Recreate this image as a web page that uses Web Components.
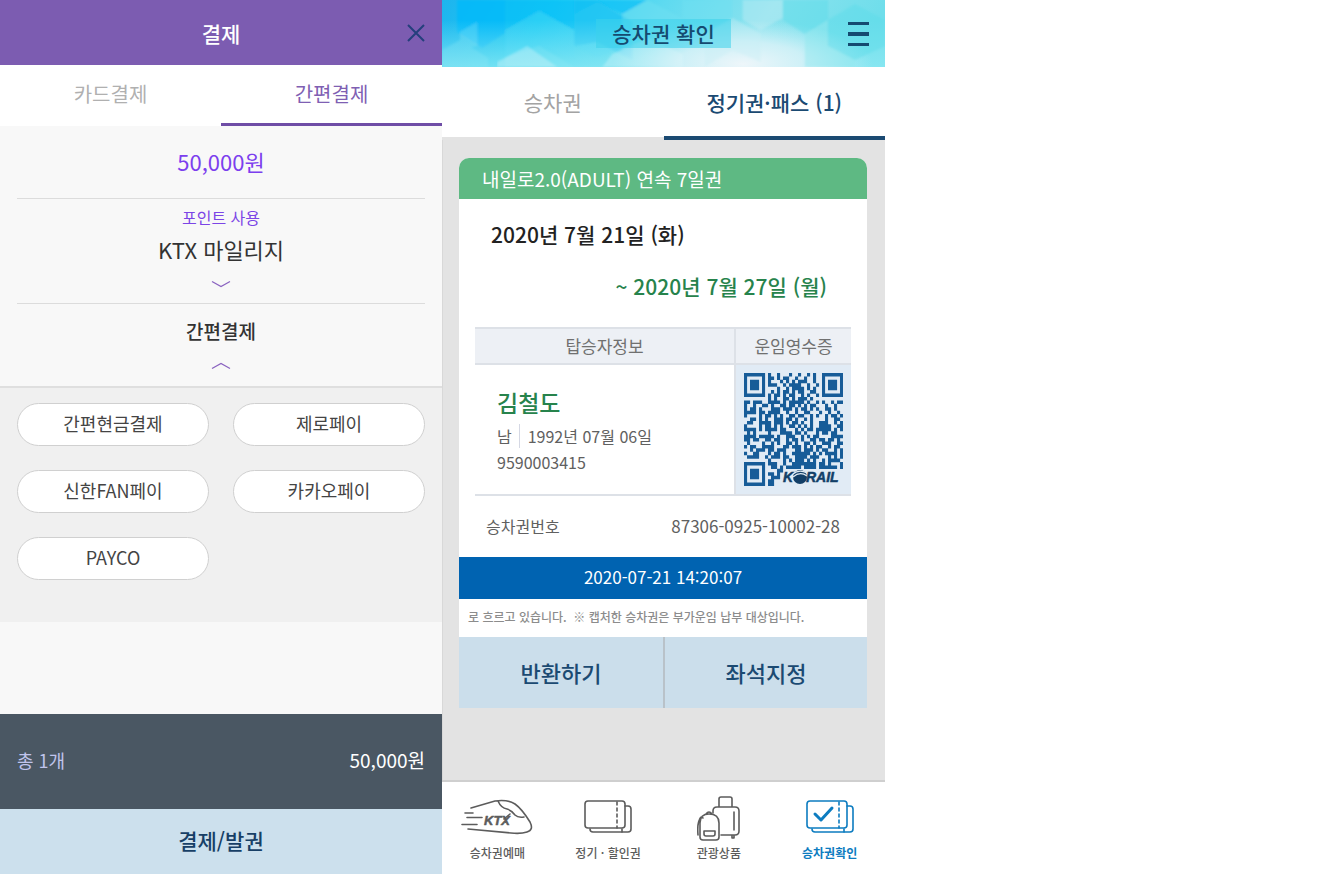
<!DOCTYPE html>
<html lang="ko">
<head>
<meta charset="utf-8">
<meta name="viewport" content="width=device-width, initial-scale=1">
<title>결제 · 승차권 확인</title>
<style>
  body {
    margin: 0;
    min-height: 100vh;
    display: grid;
    grid-template-columns: 442fr 443fr 441fr;
    background: #fff;
    font-family: "Noto Sans CJK KR", sans-serif;
    color: #333;
  }
</style>
</head>
<body>
<pay-screen></pay-screen>
<ticket-screen></ticket-screen>

<script>
const define = (name, html, setup) => {
  const template = document.createElement('template');
  template.innerHTML = html;
  customElements.define(name, class extends HTMLElement {
    constructor() {
      super();
      this.attachShadow({ mode: 'open' }).append(template.content.cloneNode(true));
    }
    connectedCallback() { if (setup) setup(this, this.shadowRoot); }
  });
};

/* Tab: active state comes from the attribute */
define('tab-item', `
  <style>
    :host { display: flex; }
    button { flex: 1; border: 0; background: none; padding: 0; font: inherit; cursor: pointer;
      line-height: 24px; color: var(--tab-idle, #b0b0b0);
      border-bottom: var(--tab-bar, 3px) solid transparent; }
    :host([active]) button { color: var(--tab-text); border-bottom-color: var(--tab-line); }
  </style>
  <button type="button" role="tab"><slot></slot></button>`,
  (el, root) => root.querySelector('button').setAttribute('aria-selected', el.hasAttribute('active')));

/* Expandable row with a chevron below its heading */
define('fold-row', `
  <style>
    :host { display: block; }
    button { display: flex; flex-direction: column; align-items: center; width: 100%; border: 0; padding: 0;
      background: none; font: inherit; color: inherit; cursor: pointer; gap: 17px; }
    svg { display: block; }
    :host([open]) svg { transform: rotate(180deg); }
  </style>
  <button type="button"><slot></slot>
    <svg width="20" height="8" viewBox="0 0 20 8" fill="none" stroke="#8a63c0" stroke-width="1.3"><path d="M1 1.5 10 6.5 19 1.5"/></svg>
  </button>`);

define('pay-option', `
  <style>
    :host { display: flex; }
    button { flex: 1; height: 43px; border: 1px solid #d0d0d0; border-radius: 22px; background: #fff;
      font: inherit; font-size: 18px; line-height: 24px; color: #444; padding: 0 0 3px; cursor: pointer; }
  </style>
  <button type="button"><slot></slot></button>`);

define('pay-screen', `
  <style>
    :host { display: flex; flex-direction: column; background: #f8f8f8; }
    header { display: grid; grid-template-columns: 1fr auto 1fr; align-items: center; height: 65px; padding: 0 16px;
      background: #7c5cb1; color: #fff; }
    h1 { grid-column: 2; margin: 0; font-size: 21px; font-weight: 500; line-height: 28px; }
    .close { justify-self: end; border: 0; background: none; padding: 0; display: block; cursor: pointer; }
    svg { display: block; }
    nav { display: grid; grid-template-columns: 1fr 1fr; height: 61px; background: #fff; font-size: 20px;
      --tab-text: #7f5fb3; --tab-line: #6f4da6; }
    .rows { padding: 0 17px; text-align: center; }
    .amount { margin: 0; padding: 21px 0 23px; font-size: 22px; line-height: 28px; color: #7c3fee; }
    .fold { border-top: 1px solid #dcdcdc; }
    .point { padding: 6px 0 15px; }
    .simple { padding: 13px 0 16px; }
    .small, .big { display: block; }
    .small { font-size: 16px; line-height: 24px; color: #7c45e6; }
    .big { font-size: 22px; line-height: 28px; padding-top: 6px; }
    .mid { font-size: 19px; font-weight: 500; line-height: 28px; }
    .options { display: grid; grid-template-columns: 1fr 1fr; gap: 24px; padding: 15px 17px 42px;
      background: #f0f0f0; border-top: 2px solid #dfdfdf; }
    .total { display: flex; justify-content: space-between; align-items: center; height: 91px; margin-top: auto;
      padding: 0 17px 4px; background: #4a5763; color: #fff; }
    .count { font-size: 18px; color: #c0c4ec; }
    .sum { font-size: 19px; }
    .submit { height: 65px; border: 0; padding: 0 0 3px; background: #cce0ed; color: #173f66; font: inherit; font-size: 21px;
      font-weight: 500; cursor: pointer; }
  </style>
  <header>
    <h1>결제</h1>
    <button class="close" type="button" aria-label="닫기">
      <svg width="20" height="20" viewBox="0 0 20 20" fill="none" stroke="#243f7c" stroke-width="2"><path d="M2 2 18 18M18 2 2 18"/></svg>
    </button>
  </header>
  <nav role="tablist"><tab-item>카드결제</tab-item><tab-item active>간편결제</tab-item></nav>
  <div class="rows">
    <p class="amount">50,000원</p>
    <div class="fold point"><fold-row><span><span class="small">포인트 사용</span><span class="big">KTX 마일리지</span></span></fold-row></div>
    <div class="fold simple"><fold-row open><span class="mid">간편결제</span></fold-row></div>
  </div>
  <div class="options">
    <pay-option>간편현금결제</pay-option><pay-option>제로페이</pay-option>
    <pay-option>신한FAN페이</pay-option><pay-option>카카오페이</pay-option>
    <pay-option>PAYCO</pay-option>
  </div>
  <div class="total"><span class="count">총 1개</span><span class="sum">50,000원</span></div>
  <button class="submit" type="button">결제/발권</button>`);

/* Receipt code, 33 × 33 modules */
const MODULES = [
  '#######.#..#...#..#..#.#..#######',
  '#.....#.##.#.##..#..#..#..#.....#',
  '#.###.#.#...#.#.#.###..#..#.###.#',
  '#.###.#.###..#.####..#..#.#.###.#',
  '#.###.#....#..#.####.#.#..#.###.#',
  '#.....#..#.#.##.#.##..##..#.....#',
  '#######.#.##.#.##..#.#..#.#######',
  '........#.#..##.#.###.#..........',
  '##.###..####.#.#####.#..#.#..#.##',
  '#..#..##.#..##.##.#.#.##...#..#..',
  '#.##.#...###.###.#.##.#.#..##.#..',
  '####.##.####..#..#..##...#..#..#.',
  '#....#.##.#.#..##.##..#.#..#.##.#',
  '..##.#.#..###.##.#..#.#....#..##.',
  '.##..####.###.#.##.#..#..###..#.#',
  '#....#.##.#.#..##.#.#.#..####..##',
  '####.#.####.##...#.#.##.#####.#.#',
  '.#.#....#...####.##.#...#.##.##..',
  '####.#####.#..###..#.#.##....####',
  '##.##..##.##..#.##.#..##.##.##.#.',
  '.#....#..#.#..##.#..##.#..###..##',
  '#.##..####...##.###.#.#.##..#.##.',
  '..#.###.##.###...##.###.#.##..#.#',
  '#..##...#.##.#..######.#.#.####.#',
  '.####..#.###.##..####.###...#.#.#',
  '........#....#.#.###.#.#..#.####.',
  '#######.###..#..########.##.#...#',
  '#.....#..##.#.#####.####.######.#',
  '#.###.#....##....................',
  '#.###.#.##.#.....................',
  '#.###.#..###.....................',
  '#.....#.##.......................',
  '#######.##.......................'
];
define('receipt-code', `
  <style>
    :host { display: block; }
    svg { display: block; margin: 0 auto; }
    text { font: italic 700 14px "Liberation Sans", sans-serif; fill: #123f68; stroke: #123f68; stroke-width: .5; }
  </style>
  <svg width="99" height="113" viewBox="0 0 99 113" role="img" aria-label="운임영수증 QR 코드">
    <path class="modules" fill="#175c98" transform="scale(3 3.424)"/>
    <text x="39" y="109">K</text>
    <circle cx="56" cy="104" r="7" fill="#123f68"/>
    <path d="M49 101Q55 96 63 100M49 104Q56 98 63 103" fill="none" stroke="#e1ebf5" stroke-width="1.2"/>
    <text x="62" y="109">RAIL</text>
  </svg>`,
  (el, root) => {
    let d = '';
    MODULES.forEach((row, y) => [...row].forEach((m, x) => { if (m === '#') d += `M${x} ${y}h1.03v1.03h-1.03z`; }));
    root.querySelector('.modules').setAttribute('d', d);
  });

define('train-ticket', `
  <style>
    :host { display: block; background: #fff; border-radius: 10px 10px 0 0; overflow: hidden; }
    h2 { margin: 0; height: 41px; padding: 0 23px; background: #5eb983; color: #fff; font-size: 19px; font-weight: 400; line-height: 41px; }
    .dates { padding: 19px 40px 25px 32px; font-size: 21px; line-height: 32px; font-weight: 500; color: #222; }
    .dates p { margin: 0; }
    .dates .to { padding-top: 20px; text-align: right; color: #27834c; }
    .wrap { padding: 0 16px; }
    table { width: 100%; border-collapse: collapse; table-layout: fixed; }
    th, td { padding: 0; border-top: 2px solid #dde1e7; border-bottom: 2px solid #dde1e7; }
    th { height: 34px; background: #edf0f5; font-size: 17px; font-weight: 400; line-height: 24px; color: #707070; }
    td { height: 129px; }
    .code { width: 115px; border-left: 2px solid #dde1e7; }
    td.code { background: #e1ebf5; }
    .person { padding: 0 22px; font-size: 16px; line-height: 26px; color: #606060; }
    .person strong { display: block; font-size: 23px; font-weight: 500; line-height: 36px; padding-bottom: 3px; color: #27834c; }
    .person span + span { border-left: 1px solid #d5d8e4; margin-left: 7px; padding-left: 8px; }
    .person p { margin: 0; }
    dl { display: flex; justify-content: space-between; align-items: center; height: 59px; margin: 0; padding: 0 27px 2px; color: #606060; }
    dt { font-size: 16px; }
    dd { margin: 0; font-size: 17px; }
    time { display: block; height: 42px; line-height: 40px; background: #0063b1; color: #fff; text-align: center; font-size: 17px; }
    .note { margin: 0; height: 38px; line-height: 35px; padding: 0 9px; font-size: 12px; font-weight: 500; color: #8c8c8c; white-space: pre; overflow: hidden; }
    .actions { display: grid; grid-template-columns: 1fr 1fr; height: 71px; background: #cbdeeb; }
    .actions button { border: 0; background: none; padding: 0 0 2px; font: inherit; font-size: 22px; font-weight: 500; color: #1b4a72; cursor: pointer; }
    .actions button + button { border-left: 2px solid #b9c2c9; }
  </style>
  <h2>내일로2.0(ADULT) 연속 7일권</h2>
  <div class="dates"><p>2020년 7월 21일 (화)</p><p class="to">~ 2020년 7월 27일 (월)</p></div>
  <div class="wrap">
    <table>
      <thead><tr><th scope="col">탑승자정보</th><th class="code" scope="col">운임영수증</th></tr></thead>
      <tbody><tr>
        <td><div class="person"><strong>김철도</strong><p><span>남</span><span>1992년 07월 06일</span></p><p>9590003415</p></div></td>
        <td class="code"><receipt-code></receipt-code></td>
      </tr></tbody>
    </table>
  </div>
  <dl><dt>승차권번호</dt><dd>87306-0925-10002-28</dd></dl>
  <time datetime="2020-07-21T14:20:07">2020-07-21 14:20:07</time>
  <p class="note">로 흐르고 있습니다.  ※ 캡처한 승차권은 부가운임 납부 대상입니다.</p>
  <div class="actions"><button type="button">반환하기</button><button type="button">좌석지정</button></div>`);

define('nav-item', `
  <style>
    :host { display: block; color: #5c5c5c; font-weight: 500; }
    :host([active]) { color: #0d7cc0; font-weight: 700; }
    a { display: flex; flex-direction: column; align-items: center; gap: 2px; padding-top: 13px; color: inherit;
      text-decoration: none; font-size: 12px; line-height: 20px; }
  </style>
  <a href="#"><slot name="icon"></slot><span><slot></slot></span></a>`);

define('ticket-screen', `
  <style>
    :host { display: flex; flex-direction: column; background: #e3e3e3; box-shadow: inset 1px 0 #d8d8d8; }
    header { display: grid; height: 67px; overflow: hidden; }
    header > * { grid-area: 1 / 1; }
    .art { display: block; width: 100%; height: 67px; }
    .bar { display: grid; grid-template-columns: 1fr auto 1fr; align-items: center; padding: 0 16px; z-index: 1; }
    h1 { grid-column: 2; margin: 0; padding: 0 16px 1px; background: rgba(60, 210, 235, .55); font-size: 21px; font-weight: 500; line-height: 28px; color: #154a70; }
    .menu { justify-self: end; border: 0; background: none; padding: 0; cursor: pointer; }
    .menu svg { display: block; }
    .tabs { display: grid; grid-template-columns: 1fr 1fr; height: 73px; font-size: 21px;
      background: linear-gradient(#fff 70px, #e3e3e3 70px); --tab-bar: 4px; --tab-idle: #a3a3a3; --tab-text: #1b4a72; --tab-line: #1b4a72; }
    .tabs [active] { font-weight: 500; }
    train-ticket { margin: 18px 18px 24px 17px; }
    footer { display: grid; grid-template-columns: repeat(4, 1fr); height: 92px; margin-top: auto; background: #fff; border-top: 2px solid #cfcfcf; }
    footer svg { display: block; fill: none; stroke: currentColor; stroke-width: 1.6; stroke-linejoin: round; stroke-linecap: round; }
    text { font: italic 700 13px "Liberation Sans", sans-serif; fill: currentColor; stroke: currentColor; stroke-width: .5; }
  </style>
  <header>
    <svg class="art" viewBox="0 0 442 67" preserveAspectRatio="none" aria-hidden="true">
      <defs>
        <linearGradient id="sky" x1="0" y1="0" x2="1" y2=".1">
          <stop offset="0" stop-color="#1db4ee"/><stop offset=".25" stop-color="#20cdf4"/>
          <stop offset=".5" stop-color="#5edaf0"/><stop offset=".75" stop-color="#8ae2ee"/><stop offset="1" stop-color="#6fdeeb"/>
        </linearGradient>
        <linearGradient id="fade" x1="0" y1="0" x2="0" y2="1"><stop offset=".3" stop-color="#8fe9f3" stop-opacity="0"/><stop offset="1" stop-color="#8fe9f3" stop-opacity=".75"/></linearGradient>
        <radialGradient id="glow"><stop offset="0" stop-color="#eef6fa"/><stop offset=".5" stop-color="#d9f2f8" stop-opacity=".85"/><stop offset="1" stop-color="#d5f1f7" stop-opacity="0"/></radialGradient>
        <filter id="soft" x="0" y="0" width="1" height="1"><feGaussianBlur stdDeviation="1.2"/></filter>
      </defs>
      <path fill="url(#sky)" d="M0 0H442V67H0z"/>
      <g filter="url(#soft)">
        <path fill="#00b9fa" opacity=".8" d="M15 0H63V33L40 48 15 32z"/>
        <path fill="#06bdf8" opacity=".6" d="M63 0H132V30L97 12 63 30zM132 0H205L180 14 155 2 132 14z"/>
        <path fill="#38d2f7" opacity=".4" d="M97 10 132 30V58L97 46 63 62V30zM155 2 190 22V42L155 58 132 44V14z"/>
        <path fill="#8be6f5" opacity=".3" d="M18 32 35 22V46L18 50zM0 50 18 40 46 58V67H0zM63 58 97 46 132 67H63z"/>
        <path fill="#12bff4" opacity=".6" d="M132 0H155L190 22V60L155 42 132 46z"/>
        <path fill="#6ee0f1" opacity=".5" d="M205 0 240 18V52L205 36 180 50V14zM240 0H290V22L262 34 240 18z"/>
      </g>
      <path fill="url(#fade)" d="M0 0H442V67H0z"/>
      <ellipse cx="300" cy="64" rx="130" ry="44" fill="url(#glow)"/>
      <g filter="url(#soft)">
        <path fill="#c9eef5" opacity=".4" d="M262 34 290 18 318 34V62L290 50 262 67zM300 0H340V18L318 30 300 20z"/>
        <path fill="#5cdbe9" opacity=".45" d="M340 0H385V20L362 34 340 20zM385 20 412 4 442 20V46L412 60 385 46z"/>
        <path fill="#8fe6ee" opacity=".45" d="M362 34 385 20V46L412 60V67H362z"/>
        <path fill="#e0f6f9" opacity=".35" d="M170 54 205 38 240 54V67H160zM55 62 85 46 115 67H55z"/>
      </g>
    </svg>
    <div class="bar">
      <h1>승차권 확인</h1>
      <button class="menu" type="button" aria-label="메뉴"><svg width="21" height="26" viewBox="0 0 21 26" fill="#154a70"><path d="M0 1h21v3H0zM0 11h21v4H0zM0 22h21v3H0z"/></svg></button>
    </div>
  </header>
  <div class="tabs" role="tablist"><tab-item>승차권</tab-item><tab-item active>정기권·패스 (1)</tab-item></div>
  <train-ticket></train-ticket>
  <footer>
    <nav-item>승차권예매
      <svg slot="icon" width="72" height="46" viewBox="0 0 72 46"><path d="M10 13 34 6Q46 4 54 9 61 14 69 27 73 35 66 37 60 39 50 38L7 34M37 6Q40 13 46 14 50 15 54 20 57 23 63 22M4 18H12M6 22.500H21M1 29.500H16"/><text x="23" y="30">KTX</text><path d="M43 24 49 19"/></svg>
    </nav-item>
    <nav-item>정기 · 할인권
      <svg slot="icon" width="48" height="46" viewBox="0 0 48 46"><rect x="1" y="6" width="40" height="27" rx="3"/><path d="M41 11H44Q47 11 47 14V34Q47 37 44 37H9Q6 37 6 34"/><path d="M33 7V33M38 34V37" stroke-dasharray="3 3"/></svg>
    </nav-item>
    <nav-item>관광상품
      <svg slot="icon" width="44" height="46" viewBox="0 0 44 46"><path d="M22 12V4Q22 2 24 2H33Q35 2 35 4V12M16 18V16Q16 12 20 12H38Q42 12 42 16V36Q42 40 38 40H24M37 17V35M35 41V43H37V41"/><path d="M3 42V28Q3 19 12 19 22 19 22 28V42Q22 45 19 45H6Q3 45 3 42zM9 19Q12 15 15 19M3 24Q0 28 1 40M7 36H18V39Q18 41 16 41H9Q7 41 7 39zM6 23Q3 20 2 27"/></svg>
    </nav-item>
    <nav-item active>승차권확인
      <svg slot="icon" width="48" height="46" viewBox="0 0 48 46"><rect x="1" y="6" width="40" height="27" rx="3"/><path d="M41 11H44Q47 11 47 14V34Q47 37 44 37H9Q6 37 6 34"/><path d="M33 7V33M38 34V37" stroke-dasharray="3 3"/><path d="M9 19 15 25 26 13" stroke-width="3"/></svg>
    </nav-item>
  </footer>`);
</script>
</body>
</html>
